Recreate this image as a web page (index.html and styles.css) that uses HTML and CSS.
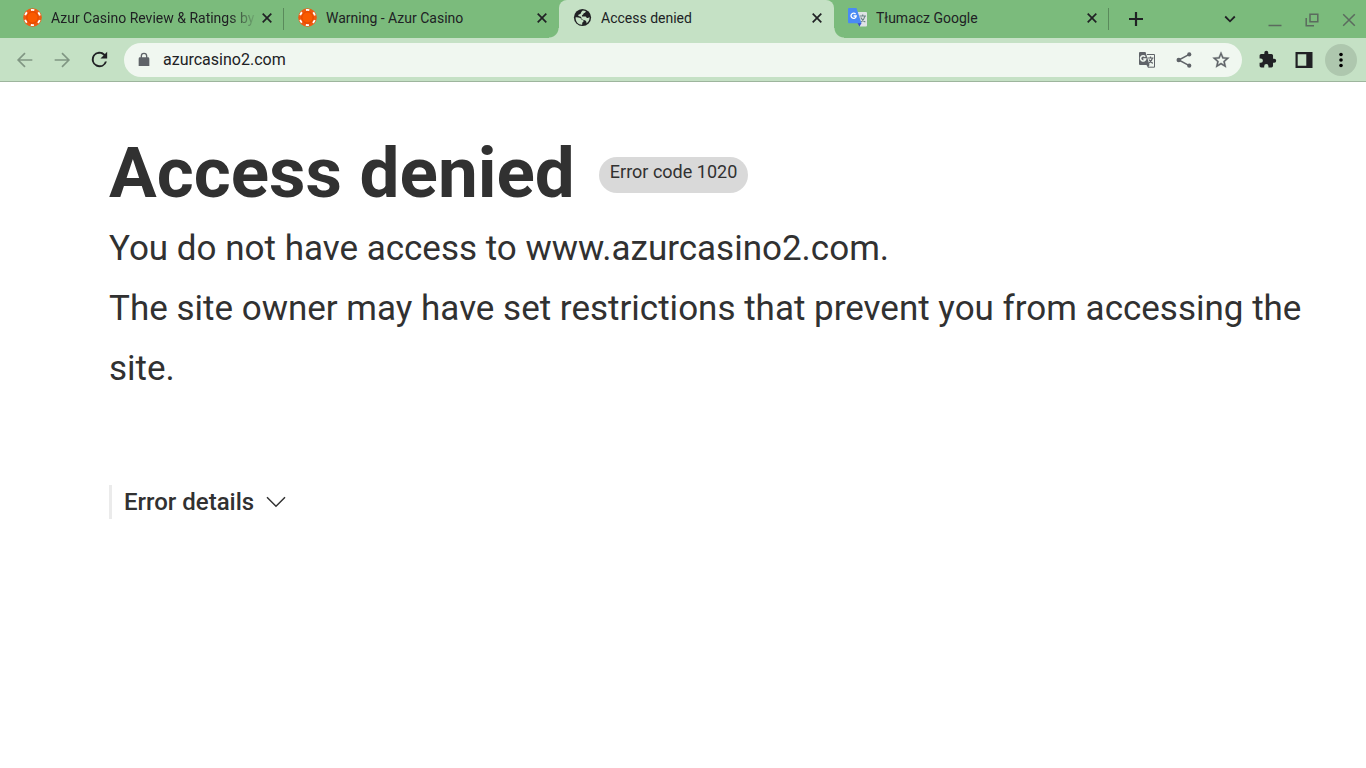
FILE: index.html
```html
<!DOCTYPE html>
<html lang="en">
<head>
	<meta charset="utf-8">
	<title>Access denied</title>
	<link rel="stylesheet" href="styles.css">
</head>
<body>
	<!-- shared icons -->
	<svg class="defs">
		<symbol id="close" viewBox="0 0 10 10"><path d="M.7.7l8.6 8.6M9.3.7L.7 9.3" fill="none" stroke="currentColor" stroke-width="1.7"/></symbol>
		<symbol id="chip" viewBox="0 0 20 20">
			<circle cx="9.500" cy="9.500" r="9.300" fill="#f05a10"/>
			<circle cx="9.500" cy="9.500" r="7.600" fill="none" stroke="#fff" stroke-width="1.900" stroke-dasharray="3.400 4.559" stroke-dashoffset="1.700" transform="rotate(90 9.500 9.500)"/>
			<circle cx="9.500" cy="9.500" r="6.400" fill="#e84c00"/>
			<circle cx="9.500" cy="9.500" r="5" fill="#fa5a00"/>
		</symbol>
	</svg>

	<header>
		<nav class="tabs">
			<div class="tab line">
				<svg class="fav" width="20" height="20"><use href="#chip"/></svg>
				<a class="fade" href="#">Azur Casino Review &amp; Ratings by</a>
				<button aria-label="Close tab"><svg width="10" height="10"><use href="#close"/></svg></button>
			</div>
			<div class="tab">
				<svg class="fav" width="20" height="20"><use href="#chip"/></svg>
				<a href="#">Warning - Azur Casino</a>
				<button aria-label="Close tab"><svg width="10" height="10"><use href="#close"/></svg></button>
			</div>
			<div class="tab on">
				<svg class="fav" width="20" height="20" viewBox="0 0 20 20">
					<circle cx="9.5" cy="9.5" r="8.6" fill="#202124"/>
					<path d="M2.6 9.200c1.800-.1 3.300.2 4.700.8 1 .5.6 1.300 1.500 1.700 1.100.4 1.900.3 1.900 1.300 0 .9-1.500 1-1.500 2v1.700C5.500 17 2.300 13.700 2.600 9.200zM9.800 2.400l2.900.7c.2 1.300-.5 1.700-1.500 1.900-.9.200-.5 1.300-1.400 1.700-.8.400-1.100 1-.7 1.700h3.400c1 0 .8 1.700 1.800 1.700.9 0 1.300-.9 2.300-.8.100 3-1.300 4.900-3.100 6.200.3-1.600-.4-2.700-1.700-3.300-1.200-.5-2.700-.3-3.300-1.400-.4-.8.100-1.600-.8-2-1-.4-2.100-.3-2.500-1.200-.4-1.100 1.600-1.100 2.300-1.800.8-.8.300-2.200 2.300-3.400z" fill="#c5e1c5"/>
				</svg>
				<a href="#">Access denied</a>
				<button aria-label="Close tab"><svg width="10" height="10"><use href="#close"/></svg></button>
			</div>
			<div class="tab line">
				<svg class="fav" width="20" height="20" viewBox="0 0 20 20">
					<path d="M8 4h10a1 1 0 0 1 1 1v12.500a1 1 0 0 1-1 1H12z" fill="#dfe3e6"/>
					<path d="M11.500 8h6.500M14.700 6.500V8M17 8c-.5 2.500-2 4.500-4.300 6M12.800 9.500c1 2 2.500 3.500 4.500 4.500" fill="none" stroke="#6d8587" stroke-width="1.200"/>
					<path d="M9.500 15h4l-2 3.500z" fill="#3a4bc8"/>
					<path d="M1 0h7.500l5 15.200H1a1 1 0 0 1-1-1V1a1 1 0 0 1 1-1z" fill="#4a8af4"/>
					<path d="M7.600 6.100A2.600 2.600 0 1 0 8.200 8H5.600" fill="none" stroke="#fff" stroke-width="1.300"/>
				</svg>
				<a href="#">Tłumacz Google</a>
				<button aria-label="Close tab"><svg width="10" height="10"><use href="#close"/></svg></button>
			</div>
			<button class="new" aria-label="New tab"><svg width="14" height="14" viewBox="0 0 14 14"><path d="M7 0v14M0 7h14" stroke="currentColor" stroke-width="2.200"/></svg></button>
			<div class="win">
				<button class="search" aria-label="Search tabs"><svg width="12" height="12" viewBox="0 0 12 12"><path d="M1.200 3.500L6 8.300l4.800-4.800" fill="none" stroke="currentColor" stroke-width="1.800"/></svg></button>
				<button aria-label="Minimize"><svg width="14" height="14" viewBox="0 0 14 14"><path d="M.5 12.500h13" stroke="currentColor" stroke-width="1.500"/></svg></button>
				<button aria-label="Restore"><svg width="14" height="14" viewBox="0 0 14 14"><path d="M5 1.200h7.800v7.600H5zM1.200 5v7.800H9" fill="none" stroke="currentColor" stroke-width="1.500"/></svg></button>
				<button aria-label="Close"><svg width="14" height="14" viewBox="0 0 14 14"><path d="M1.200 1.200l11.600 11.600M12.800 1.200L1.200 12.800" stroke="currentColor" stroke-width="1.500"/></svg></button>
			</div>
		</nav>

		<div class="bar">
			<button class="off" aria-label="Back"><svg width="22" height="22" viewBox="0 0 24 24"><path d="M20 12H5M12 4.500L4.500 12l7.500 7.500" fill="none" stroke="currentColor" stroke-width="1.800"/></svg></button>
			<button class="off" aria-label="Forward"><svg width="22" height="22" viewBox="0 0 24 24"><path d="M4 12h15M12 4.500l7.500 7.500-7.500 7.500" fill="none" stroke="currentColor" stroke-width="1.800"/></svg></button>
			<button aria-label="Reload"><svg width="23" height="23" viewBox="0 0 24 24"><path d="M17.650 6.350A8 8 0 1 0 19.730 14h-2.080A6 6 0 1 1 12 6c1.660 0 3.140.69 4.220 1.780L13 11h7V4z" fill="currentColor"/></svg></button>
			<div class="url">
				<svg width="16" height="16" viewBox="0 0 24 24"><path d="M18 8h-1V6A5 5 0 0 0 7 6v2H6a2 2 0 0 0-2 2v11h16V10a2 2 0 0 0-2-2zM9 8V6a3 3 0 0 1 6 0v2z" fill="#5f6368"/></svg>
				<input type="text" aria-label="Address" value="azurcasino2.com">
				<button aria-label="Translate"><svg width="18" height="18" viewBox="0 0 18 18">
					<path d="M9 3.500h7.500v12.700H10" fill="none" stroke="currentColor" stroke-width="1"/>
					<path d="M9.500 7H15.500M12.500 5.500V7M14.500 7c-.5 2.200-1.800 3.900-3.800 5.300M11 8.500c.8 1.700 2 3 3.800 3.900" fill="none" stroke="currentColor" stroke-width="1.200"/>
					<path d="M2 1h5.500l4 13H2a1 1 0 0 1-1-1V2a1 1 0 0 1 1-1zM8.500 14h3L10 16.700z" fill="currentColor"/>
					<path d="M7.200 5.800A2.600 2.600 0 1 0 7.700 8H5.200" fill="none" stroke="#f0f7f0" stroke-width="1.500"/>
				</svg></button>
				<button aria-label="Share"><svg width="18" height="18" viewBox="0 0 24 24"><path d="M19 4.500L5 12l14 7.500" fill="none" stroke="currentColor" stroke-width="2"/><circle cx="19" cy="4.500" r="2.800" fill="currentColor"/><circle cx="5" cy="12" r="3" fill="currentColor"/><circle cx="19" cy="19.500" r="2.800" fill="currentColor"/></svg></button>
				<button aria-label="Bookmark"><svg width="20" height="20" viewBox="0 0 24 24"><path d="M22 9.240l-7.190-.62L12 2 9.190 8.630 2 9.240l5.460 4.730L5.820 21 12 17.270 18.180 21l-1.630-7.030zM12 15.400l-3.760 2.270 1-4.280-3.320-2.880 4.380-.38L12 6.100l1.710 4.040 4.380.38-3.320 2.880 1 4.280z" fill="currentColor" stroke="currentColor" stroke-width=".4"/></svg></button>
			</div>
			<button aria-label="Extensions"><svg width="19" height="19" viewBox="0 0 24 24"><path d="M20.500 11H19V7a2 2 0 0 0-2-2h-4V3.500a2.500 2.500 0 0 0-5 0V5H4a2 2 0 0 0-2 2v3.800h1.500a2.700 2.700 0 0 1 0 5.400H2V20a2 2 0 0 0 2 2h3.800v-1.500a2.700 2.700 0 0 1 5.400 0V22H17a2 2 0 0 0 2-2v-4h1.500a2.500 2.500 0 0 0 0-5z" fill="currentColor"/></svg></button>
			<button aria-label="Side panel"><svg width="18" height="18" viewBox="0 0 18 18"><path d="M.5 1h17v16H.5zM2.700 3.200v11.600h8.600V3.200z" fill="currentColor" fill-rule="evenodd"/></svg></button>
			<button class="menu" aria-label="Menu"><svg width="16" height="16" viewBox="0 0 16 16"><circle cx="8" cy="2.500" r="1.800"/><circle cx="8" cy="8" r="1.800"/><circle cx="8" cy="13.500" r="1.800"/></svg></button>
		</div>
	</header>

	<main>
		<div class="title">
			<h1>Access denied</h1>
			<span>Error code 1020</span>
		</div>
		<p>You do not have access to www.azurcasino2.com.</p>
		<p>The site owner may have set restrictions that prevent you from accessing the site.</p>
		<button class="details">Error details <svg width="20" height="12" viewBox="0 0 20 12"><path d="M1 1.200l9 9 9-9" fill="none" stroke="currentColor" stroke-width="1.500"/></svg></button>
	</main>
</body>
</html>
```
FILE: styles.css
```css
* {
	margin: 0;
	padding: 0;
	box-sizing: border-box;
}
body {
	font-family: Roboto, "Liberation Sans", sans-serif;
	color: #313131;
	background: #fff;
}
button {
	font: inherit;
	color: inherit;
	border: 0;
	background: none;
	cursor: pointer;
}
svg {
	display: block;
	flex: none;
}
.defs {
	display: none;
}
header {
	color: #202124;
	background: #c5e1c5;
	border-bottom: 1px solid #9db59d;
}

/* tab strip */
.tabs {
	display: flex;
	height: 38px;
	padding-left: 9px;
	background: #7bbb7c;
}
.tab {
	position: relative;
	display: flex;
	align-items: center;
	flex: 0 1 275px;
	min-width: 0;
	padding: 0 8px 2px 14px;
}
.tab a {
	flex: 1;
	min-width: 0;
	margin-left: 8px;
	overflow: hidden;
	white-space: nowrap;
	font-size: 14px;
	line-height: 20px;
	color: #202124;
	text-decoration: none;
}
.tab a.fade {
	-webkit-mask-image: linear-gradient(to right, #000 86%, transparent);
	mask-image: linear-gradient(to right, #000 86%, transparent);
}
.tab button {
	display: flex;
	justify-content: center;
	width: 18px;
	padding: 4px 0;
}
.line {
	background: linear-gradient(#5a8a5b, #5a8a5b) right center / 1px 22px no-repeat;
}
.on {
	background: #c5e1c5;
	border-radius: 8px 8px 0 0;
}
.on:before,
.on:after {
	content: "";
	position: absolute;
	bottom: 0;
	width: 10px;
	height: 10px;
}
.on:before {
	right: 100%;
	background: radial-gradient(circle at 0 0, transparent 9px, #c5e1c5 10px);
}
.on:after {
	left: 100%;
	background: radial-gradient(circle at 100% 0, transparent 9px, #c5e1c5 10px);
}
.new {
	padding: 0 20px;
}
.win {
	display: flex;
	align-items: center;
	gap: 10px;
	margin-left: auto;
	padding-right: 4px;
	color: #5b6a5e;
}
.win button {
	display: flex;
	justify-content: center;
	width: 27px;
	padding-top: 2px;
}
.win .search {
	width: 42px;
	padding: 0;
	color: #202124;
}

/* toolbar */
.bar {
	display: flex;
	align-items: center;
	gap: 5px;
	height: 43px;
	padding: 0 9px;
}
.bar button {
	display: flex;
	align-items: center;
	justify-content: center;
	flex: none;
	width: 32px;
	height: 32px;
}
.bar .off {
	color: #809683;
}
.url {
	display: flex;
	align-items: center;
	gap: 5px;
	flex: 1;
	min-width: 0;
	height: 34px;
	margin: 0 4px;
	padding: 0 5px 0 12px;
	border-radius: 17px;
	background: #f0f7f0;
	color: #5f6368;
}
.url input {
	flex: 1;
	min-width: 0;
	margin-left: 6px;
	border: 0;
	outline: 0;
	background: none;
	font: 16px/20px Roboto, "Liberation Sans", sans-serif;
	color: #202124;
}
.bar .menu {
	border-radius: 50%;
	background: #aec7ae;
}

/* error page */
main {
	padding: 49px 48px 48px 109px;
}
.title {
	display: flex;
	align-items: center;
	gap: 24px;
}
h1 {
	font-size: 71px;
	line-height: 84px;
	font-weight: 700;
}
.title span {
	height: 36px;
	margin-top: 4px;
	padding: 0 11px;
	border-radius: 18px;
	background: #d9d9d9;
	font-size: 18px;
	line-height: 30px;
}
p {
	font-size: 35px;
	line-height: 60px;
}
.title + p {
	margin-top: 4px;
}
.details {
	display: flex;
	align-items: center;
	gap: 12px;
	margin-top: 86px;
	padding-left: 12px;
	border-left: 3px solid #ebebeb;
	font-size: 24px;
	line-height: 34px;
	font-weight: 500;
}
```
